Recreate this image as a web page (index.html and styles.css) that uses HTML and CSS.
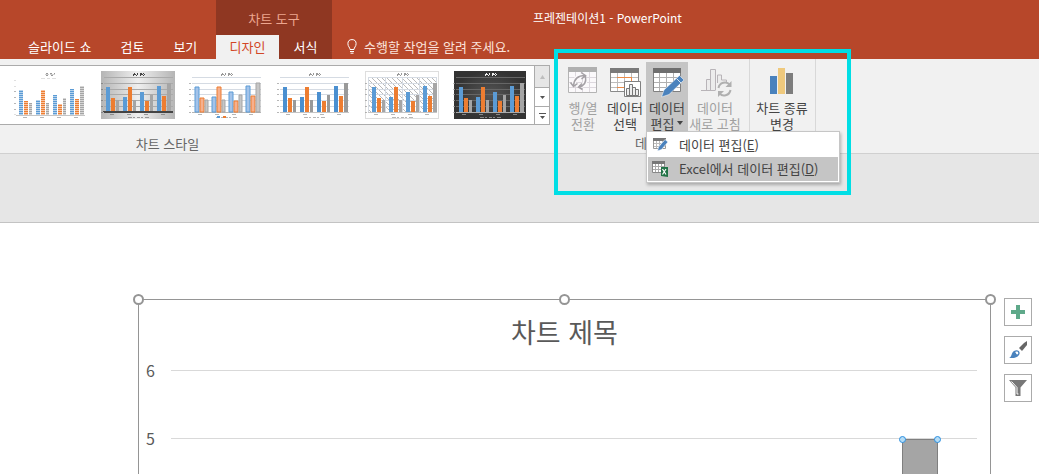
FILE: index.html
```html
<!DOCTYPE html>
<html lang="ko">
<head>
<meta charset="utf-8">
<title>프레젠테이션1 - PowerPoint</title>
<link rel="stylesheet" href="styles.css">
</head>
<body>
<svg class="defs" aria-hidden="true">
  <defs>
    <symbol id="bars" viewBox="0 0 74 48" overflow="visible">
      <path class="bar-a" d="M5 16h4v25h-4zM22 26h4v15h-4zM39 21h4v20h-4zM56 15h4v26h-4z"/>
      <path class="bar-b" d="M10 27h4v14h-4zM27 16h4v25h-4zM44 30h4v11h-4zM61 25h4v16h-4z"/>
      <path class="bar-c" d="M15 29h3v12h-3zM32 29h3v12h-3zM49 24h3v17h-3zM66 12h4v29h-4z"/>
    </symbol>
    <symbol id="grid" viewBox="0 0 74 48">
      <path class="gridline" d="M3 6.500h69M3 12.500h69M3 18.500h69M3 23.500h69M3 29.500h69M3 35.500h69"/>
      <path class="axis" d="M3 41.500h69"/>
      <path class="ticks" d="M0 12.500h2M0 18.500h2M0 23.500h2M0 29.500h2M0 35.500h2M0 41.500h2M9 43.500h4M26 43.500h4M43 43.500h4M60 43.500h4"/>
    </symbol>
    <symbol id="marks" viewBox="0 0 74 48">
      <path class="title-mark" d="M32 3.500h3m1 0h1m2 0h3m1 0h1M33 2.500h1m2 0h1m2 0h2m1 0h1M32 4.500h1m2 0h1m3 0h1m2 0h1"/>
      <path class="ticks" d="M27 46.500h4m1 0h2m2 0h3m1 0h2m2 0h4"/>
    </symbol>
    <linearGradient id="silver"><stop offset="0" stop-color="#b5b5b5"/><stop offset=".5" stop-color="#efefef"/><stop offset="1" stop-color="#b5b5b5"/></linearGradient>
    <radialGradient id="coal"><stop offset="0" stop-color="#565656"/><stop offset="1" stop-color="#333"/></radialGradient>
    <pattern id="stripes" width="74" height="2" patternUnits="userSpaceOnUse"><path d="M0 0h74v1H0z" fill="#fff" opacity=".55"/></pattern>
    <pattern id="hatch" width="5" height="5" patternUnits="userSpaceOnUse"><path d="M0 0l5 5" stroke="#a8a8a8" stroke-width=".8"/></pattern>
  </defs>
</svg>

<header class="titlebar">
  <nav class="tabs">
    <button class="tab">슬라이드 쇼</button>
    <button class="tab">검토</button>
    <button class="tab">보기</button>
  </nav>
  <div class="context">
    <div class="context-title">차트 도구</div>
    <div class="context-tabs">
      <button class="tab tab-active">디자인</button>
      <button class="tab tab-context">서식</button>
    </div>
  </div>
  <h1 class="doc-title">프레젠테이션1 - PowerPoint</h1>
  <button class="tab tell-me">
    <svg width="10" height="16" viewBox="0 0 10 16" fill="none" stroke="#fff"><path d="M3 10.500C3 8.500.9 7.500.9 4.700a4.100 4.100 0 0 1 8.200 0C9.100 7.500 7 8.500 7 10.500zM3 12.500h4M3.500 14.200h3"/></svg>
    수행할 작업을 알려 주세요.
  </button>
</header>

<section class="ribbon">
  <div class="group group-styles">
    <div class="gallery">
      <div class="thumbs">
        <button class="thumb thumb-1" aria-label="스타일 1"><svg viewBox="0 0 74 48"><path class="ticks" d="M1 9.500h2M1 15.500h2M1 20.500h2M1 26.500h2M1 32.500h2M1 38.500h2M1 43.500h2M10 46.500h4M27 46.500h4M44 46.500h4M61 46.500h4M28 7.500h4m2 0h3m2 0h4"/><path class="title-mark" d="M32 3.500h4m1 0h5M33 2.500h2m2 0h2m2 0h1M33 4.500h2m3 0h2"/><g transform="translate(1 3)"><use href="#bars"/><rect width="74" height="41" fill="url(#stripes)"/></g><path class="axis" d="M3 44.500h69"/></svg></button>
        <button class="thumb thumb-2" aria-label="스타일 2"><svg viewBox="0 0 74 48"><rect width="74" height="48" fill="url(#silver)"/><use href="#grid"/><use href="#bars"/><path class="axis" d="M2 40.500h70"/><use href="#marks"/></svg></button>
        <button class="thumb thumb-3" aria-label="스타일 3"><svg viewBox="0 0 74 48"><use href="#grid"/><use href="#bars" x="1"/><use href="#marks"/><path fill="#5b9bd5" d="M28 45h3v2h-3z"/><path fill="#ed7d31" d="M34 45h3v2h-3z"/></svg></button>
        <button class="thumb thumb-4" aria-label="스타일 4"><svg viewBox="0 0 74 48"><use href="#grid"/><use href="#bars" x="1"/><use href="#marks"/></svg></button>
        <button class="thumb thumb-5" aria-label="스타일 5"><svg viewBox="0 0 74 48"><rect x=".5" y=".5" width="73" height="47" fill="none" stroke="#dedede"/><rect x="3" y="6" width="69" height="35" fill="url(#hatch)"/><use href="#grid"/><path class="gridline" d="M3.500 6v35M20.500 6v35M37.500 6v35M54.500 6v35M71.500 6v35"/><use href="#bars" x="2"/><use href="#marks"/></svg></button>
        <button class="thumb thumb-6" aria-label="스타일 6"><svg viewBox="0 0 74 48"><rect x="1" width="72" height="48" fill="url(#coal)"/><use href="#grid"/><use href="#bars" x="1"/><use href="#marks"/></svg></button>
      </div>
      <div class="gallery-scroll">
        <button class="scroll scroll-off" aria-label="위로"><svg width="5" height="4"><path d="M0 4l2.500-4L5 4z" fill="#bdbdbd"/></svg></button>
        <button class="scroll" aria-label="아래로"><svg width="5" height="3"><path d="M0 0h5L2.500 3z" fill="#555"/></svg></button>
        <button class="scroll" aria-label="자세히"><svg width="7" height="6"><path d="M0 0h7v1H0zM1 3h5L3.500 6z" fill="#555"/></svg></button>
      </div>
    </div>
    <div class="group-label">차트 스타일</div>
  </div>

  <div class="group group-data">
    <div class="buttons">
      <button class="cmd cmd-off">
        <svg class="icon" viewBox="0 0 32 32"><path d="M1.500 6v20.500h28V6" fill="#fbf9fb" stroke="#b4b4b4"/><path d="M1 1h29v5H1z" fill="#b0b0b0"/><path d="M2 11.500h27M2 16.500h27M2 21.500h27M8.500 6v20M15.500 6v20M22.500 6v20" stroke="#ddd8de" fill="none"/><path d="M6.500 19C7 13 11 9.500 17 9.500M18 12c1 5-1 8-6 9" fill="none" stroke="#fbf9fb" stroke-width="4"/><path d="M6.500 20C7 13 11 9.500 18 9.500M14 6.500l4.500 3-4 3.500M3.500 16.500l3 4 4-3M18.500 10c1 6-1 10-7 11M15 17.500L11.500 21l4 2.500" fill="none" stroke="#a4a0a5" stroke-width="1.500"/></svg>
        <span>행/열<br>전환</span>
      </button>
      <button class="cmd">
        <svg class="icon" viewBox="0 0 32 32"><path d="M1.500 7v18.500h28V7" fill="#fff" stroke="#8a8a8a"/><path d="M1 2h29v5H1z" fill="#7a7a7a"/><path d="M2 11.500h27M2 16.500h27M2 21.500h27M8.500 7v18M15.500 7v18M22.500 7v18" stroke="#bcbcbc" fill="none"/><path d="M8 11.500h15M8 21.500h7M22.500 11v5" stroke="#ed8b46" fill="none"/><path d="M15.500 15.500h16v15h-16z" fill="#fff" stroke="#808080"/><path d="M17.500 29.500v-7h3v7zM20.500 29.500v-11h3v11zM23.500 29.500v-8h3v8zM26.500 29.500v-6h3v6z" fill="#eee" stroke="#777"/></svg>
        <span>데이터<br>선택</span>
      </button>
      <div class="split">
        <button class="cmd cmd-open" aria-expanded="true">
          <svg class="icon" viewBox="0 0 32 32"><path d="M2.500 7v18.500h27V7" fill="#fff" stroke="#808080"/><path d="M2 2h28v5H2z" fill="#6e6e6e"/><path d="M3 11.500h26M3 16.500h26M3 21.500h26M8.500 7v18M15.500 7v18M22.500 7v18" stroke="#b0b0b0" fill="none"/><path d="M28.500 9.500l4.500 4.500L18 28.500l-7.500 2.500 2.500-7z" fill="#4a82bd" stroke="#fff" stroke-width=".5"/><path d="M25.500 12.500l4.500 4.500" stroke="#dce8f4"/></svg>
          <span>데이터<br>편집<svg class="caret" width="6" height="4"><path d="M0 0h6L3 4z" fill="#444"/></svg></span>
        </button>
        <div class="menu" role="menu">
          <button class="item" role="menuitem">
            <svg width="16" height="16" viewBox="0 0 16 16"><path d="M1.500 4v7.500h12V4" fill="#fff" stroke="#999"/><path d="M1 1h13v3H1z" fill="#777"/><path d="M2 6.500h11M2 9.500h11M4.500 4v7M7.500 4v7M10.500 4v7" stroke="#bbb"/><path d="M13 2.500L16 5 9.500 12.500 5.500 14l1-4z" fill="#4a82bd" stroke="#fff" stroke-width=".6"/></svg>
            <span>데이터 편집(<u>E</u>)</span>
          </button>
          <button class="item item-hover" role="menuitem">
            <svg width="16" height="16" viewBox="0 0 16 16"><path d="M.5 3v8.500h12V3" fill="#fff" stroke="#888"/><path d="M0 0h13v3H0z" fill="#777"/><path d="M1 5.500h11M1 8.500h11M3.500 3v8M6.500 3v8M9.500 3v8" stroke="#aaa"/><path d="M9 6h7v10l-7-1z" fill="#217346"/><path d="M10.500 8l3.500 5.500M14 8l-3.500 5.500" stroke="#fff" stroke-width="1.200"/></svg>
            <span>Excel에서 데이터 편집(<u>D</u>)</span>
          </button>
        </div>
      </div>
      <button class="cmd cmd-wide cmd-off">
        <svg class="icon" viewBox="0 0 32 32"><path d="M2 24.500h14M7.500 24.500v-11h4v11M11.500 24.500v-21h5v21M18.500 17v-8h4v5h5v3" fill="#ececec" stroke="#b8b4b8"/><path d="M19.500 22a6.500 6.500 0 0 1 11.500-3M31.500 24a6.500 6.500 0 0 1-11.500 3" fill="none" stroke="#b0b0b0" stroke-width="2"/><path d="M32.500 15v6h-6zM19 31v-6h6z" fill="#b0b0b0"/></svg>
        <span>데이터<br>새로 고침</span>
      </button>
    </div>
    <div class="group-label">데이터</div>
  </div>

  <div class="group group-type">
    <div class="buttons">
      <button class="cmd cmd-wide">
        <svg class="icon" viewBox="0 0 32 32"><path d="M4 10h7v18H4z" fill="#4a82bd"/><path d="M12 2h7v26h-7z" fill="#efc97d"/><path d="M20 7h7v21h-7z" fill="#7d7d7d"/></svg>
        <span>차트 종류<br>변경</span>
      </button>
    </div>
  </div>
  <div class="highlight"></div>
</section>

<div class="workspace"></div>

<main class="slide">
  <section class="chart">
    <i class="handle handle-left"></i><i class="handle handle-mid"></i><i class="handle handle-right"></i>
    <h2 class="chart-title">차트 제목</h2>
    <div class="plot">
      <div class="row"><span>6</span><i class="line"></i></div>
      <div class="row"><span>5</span><i class="line"></i></div>
      <div class="bar"><i class="dot dot-left"></i><i class="dot dot-right"></i></div>
    </div>
  </section>
  <aside class="tools">
    <button class="tool" aria-label="차트 요소"><svg width="20" height="20" viewBox="0 0 20 20"><path d="M8 3h4v5h5v4h-5v5H8v-5H3V8h5z" fill="#5fa98a"/></svg></button>
    <button class="tool" aria-label="차트 스타일"><svg width="20" height="20" viewBox="0 0 20 20"><path d="M19 1v4l-5 6-3-3 5-5z" fill="#666"/><path d="M10 8.500l3.500 3" stroke="#fff"/><path d="M1 18c3-1 2-5 5-7 4-2 7 1 5 4-2 3-6 3-10 3z" fill="#4a82bd"/><path d="M7 12c2-1.500 4 0 3 2-1 1-2 0-2-1" fill="#fff"/></svg></button>
    <button class="tool" aria-label="차트 필터"><svg width="20" height="20" viewBox="0 0 20 20"><path d="M1 2h18l-6.500 7.500V18h-5V9.500z" fill="#777"/><path d="M3.500 3.500L9 9.500V16h1.500" fill="none" stroke="#fff"/></svg></button>
  </aside>
</main>
</body>
</html>
```

FILE: styles.css
```css
* { box-sizing: border-box; }

body {
  margin: 0;
  min-height: 100vh;
  display: flex;
  flex-direction: column;
  overflow: hidden;
  background: #fff;
  color: #444;
  font: 13px/16px "Noto Sans CJK KR", sans-serif;
}

button {
  margin: 0;
  padding: 0;
  border: 0;
  background: none;
  color: inherit;
  font: inherit;
}

svg { display: block; }
.defs { position: absolute; width: 0; height: 0; }

/* Title bar */
.titlebar {
  display: grid;
  grid-template-columns: 216px 116px 1fr;
  grid-template-rows: 35px 24px;
  background: #b7472a;
  color: #fff;
}
.tabs {
  grid-row: 2;
  display: flex;
  gap: 29px;
  padding-left: 28px;
}
.tab { height: 24px; white-space: nowrap; }
.context {
  grid-column: 2;
  grid-row: 1 / 3;
  display: flex;
  flex-direction: column;
  background: #8f3722;
}
.context-title {
  height: 35px;
  padding-top: 3px;
  line-height: 32px;
  text-align: center;
  color: #eda68f;
}
.context-tabs { display: flex; }
.tab-active { width: 63px; background: #f1f1f1; color: #d24726; }
.tab-context { flex: 1; }
.doc-title {
  grid-column: 3;
  grid-row: 1;
  margin: 0;
  padding-left: 201px;
  font-size: 12px;
  font-weight: 400;
  line-height: 36px;
}
.tell-me {
  grid-column: 3;
  grid-row: 2;
  justify-self: start;
  display: flex;
  align-items: center;
  gap: 7px;
  padding-left: 15px;
  color: #fbe3da;
}

/* Ribbon */
.ribbon {
  position: relative;
  display: flex;
  height: 95px;
  background: #f1f1f1;
  border-bottom: 1px solid #d0d0d0;
}
.group { display: flex; flex-direction: column; }
.group-styles { width: 556px; border-right: 1px solid #d8d8d8; }
.group-data { padding: 0 7px 0 6px; border-right: 1px solid #d8d8d8; }
.group-type { padding: 0 6px 0 5px; border-right: 1px solid #d8d8d8; }
.group-label { padding: 3px 0 0 2px; text-align: center; color: #666; }
.group-styles .group-label { padding: 11px 220px 0 0; }

.gallery {
  display: flex;
  height: 60px;
  margin: 6px 5px 0 0;
  border: 1px solid #ababab;
  border-left: 0;
  background: #fff;
}
.thumbs { flex: 1; display: flex; gap: 14px; padding: 5px 0 0 13px; }
.thumb { width: 74px; height: 48px; }
.gallery-scroll {
  width: 15px;
  display: grid;
  grid-template-rows: 21px 19px 18px;
  border-left: 1px solid #ababab;
}
.scroll { display: flex; align-items: center; justify-content: center; }
.scroll + .scroll { border-top: 1px solid #ababab; }
.scroll-off { background: #e6e6e6; }

.thumb {
  --a: #5b9bd5;
  --b: #ed7d31;
  --c: #a5a5a5;
  --grid: #d5dbe3;
  --axis: #c5c5c5;
  --tick: #999;
  --title: #999;
}
.thumb-2 { --axis: #444; --grid: #aaa; --tick: #777; --title: #444; }
.thumb-3 { --a: #a3c3ea; --b: #f7b08d; --c: #c6c6c6; --axis: #b5b5b5; }
.thumb-3 .bar-a, .thumb-3 use { stroke-width: 1px; }
.thumb-4 { --a: #4a8fd0; --c: #999; }
.thumb-6 { --grid: #666; --axis: #aaa; --tick: #aaa; --title: #eee; }
.thumb-3 { --edge-a: #5b9bd5; --edge-b: #ed7d31; --edge-c: #a5a5a5; }
.bar-a { fill: var(--a); stroke: var(--edge-a, none); }
.bar-b { fill: var(--b); stroke: var(--edge-b, none); }
.bar-c { fill: var(--c); stroke: var(--edge-c, none); }
.gridline { stroke: var(--grid); }
.axis { stroke: var(--axis); }
.ticks { stroke: var(--tick); opacity: .7; }
.title-mark { stroke: var(--title); }

.buttons { display: flex; height: 73px; padding-top: 3px; }
.split { position: relative; }
.cmd {
  display: flex;
  flex-direction: column;
  align-items: center;
  gap: 2px;
  width: 42px;
  height: 70px;
  padding-top: 4px;
  white-space: nowrap;
}
.cmd-wide { width: 54px; }
.cmd-off { color: #a0a0a0; }
.cmd-open { background: #c5c5c5; }
.icon { width: 32px; height: 32px; overflow: visible; }
.caret { display: inline-block; margin-left: 3px; vertical-align: 4px; }

.menu {
  position: absolute;
  z-index: 1;
  top: 69px;
  left: 0;
  width: 194px;
  padding: 1px;
  border: 1px solid #c6c6c6;
  background: #fff;
  box-shadow: 1px 2px 3px #0004;
}
.item {
  display: flex;
  align-items: center;
  gap: 11px;
  width: 100%;
  height: 24px;
  padding-left: 4px;
  white-space: nowrap;
}
.item-hover { background: #c5c5c5; }

.highlight {
  position: absolute;
  z-index: 2;
  top: -10px;
  left: 554px;
  width: 297px;
  height: 146px;
  border: 4px solid #00dee5;
  pointer-events: none;
}

.workspace {
  height: 69px;
  background: #e6e6e6;
  border-bottom: 1px solid #c3c3c3;
}

/* Slide */
.slide {
  flex: 1;
  display: flex;
  gap: 13px;
  padding: 75px 7px 0 138px;
}
.chart {
  position: relative;
  flex: 1;
  margin-top: 1px;
  border: 1px solid #959595;
  border-bottom: 0;
}
.handle {
  position: absolute;
  top: -6px;
  width: 11px;
  height: 11px;
  border: 2px solid #959595;
  border-radius: 50%;
  background: #fff;
}
.handle-left { left: -6px; }
.handle-mid { left: calc(50% - 6px); }
.handle-right { right: -6px; }
.chart-title {
  margin: 0;
  padding-top: 14px;
  height: 36px;
  font-size: 27px;
  font-weight: 400;
  line-height: 36px;
  text-align: center;
  color: #595959;
}
.plot { position: relative; padding: 0 13px 0 7px; }
.row {
  display: flex;
  align-items: center;
  gap: 16px;
  height: 68px;
  font-size: 16px;
  color: #595959;
}
.line { flex: 1; height: 1px; background: #d9d9d9; }
.bar {
  position: absolute;
  top: 103px;
  right: 52px;
  width: 36px;
  height: 36px;
  border: 1px solid #7f7f7f;
  border-bottom: 0;
  background: #a5a5a5;
}
.dot {
  position: absolute;
  top: -4px;
  width: 7px;
  height: 7px;
  border: 1px solid #2b8fe0;
  border-radius: 50%;
  background: #b5dcf5;
}
.dot-left { left: -4px; }
.dot-right { right: -4px; }

.tools { display: flex; flex-direction: column; gap: 10px; }
.tool {
  display: flex;
  align-items: center;
  justify-content: center;
  width: 28px;
  height: 28px;
  border: 1px solid #ababab;
  background: #fff;
}
```
